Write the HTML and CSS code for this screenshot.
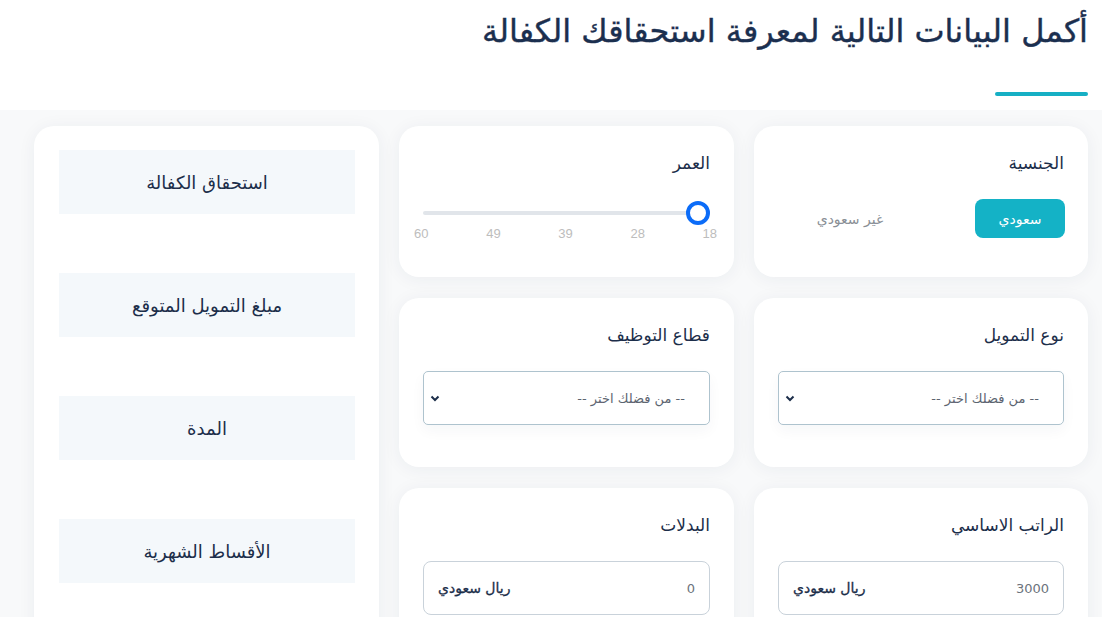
FILE: index.html
```html
<!DOCTYPE html>
<html lang="ar" dir="rtl">
<head>
  <meta charset="utf-8">
  <meta name="viewport" content="width=device-width, initial-scale=1">
  <title>حاسبة الكفالة</title>
  <link rel="stylesheet" href="styles.css">
</head>
<body>
  <header class="head">
    <h1>أكمل البيانات التالية لمعرفة استحقاقك الكفالة</h1>
    <i class="bar"></i>
  </header>
  <main class="calc">
    <section class="card">
      <h3>الجنسية</h3>
      <div class="toggle">
        <button class="opt on">سعودي</button>
        <button class="opt">غير سعودي</button>
      </div>
    </section>
    <section class="card">
      <h3>العمر</h3>
      <input class="range" type="range" min="18" max="60" value="18">
      <div class="ticks"><span>18</span><span>28</span><span>39</span><span>49</span><span>60</span></div>
    </section>
    <aside class="card results">
      <div class="res">استحقاق الكفالة</div>
      <div class="res">مبلغ التمويل المتوقع</div>
      <div class="res">المدة</div>
      <div class="res">الأقساط الشهرية</div>
    </aside>
    <section class="card tall">
      <h3>نوع التمويل</h3>
      <div class="select">
        <span>-- من فضلك اختر --</span>
        <svg width="10" height="7" viewBox="0 0 10 7"><path d="M1.5 1.5L5 5l3.5-3.5" fill="none" stroke="#1c2e4a" stroke-width="2"/></svg>
      </div>
    </section>
    <section class="card tall">
      <h3>قطاع التوظيف</h3>
      <div class="select">
        <span>-- من فضلك اختر --</span>
        <svg width="10" height="7" viewBox="0 0 10 7"><path d="M1.5 1.5L5 5l3.5-3.5" fill="none" stroke="#1c2e4a" stroke-width="2"/></svg>
      </div>
    </section>
    <section class="card tall">
      <h3>الراتب الاساسي</h3>
      <div class="money"><span class="val">3000</span><b>ريال سعودي</b></div>
    </section>
    <section class="card tall">
      <h3>البدلات</h3>
      <div class="money"><span class="val">0</span><b>ريال سعودي</b></div>
    </section>
  </main>
</body>
</html>
```

FILE: styles.css
```css
body {
  margin: 0;
  font-family: "DejaVu Sans", "Noto Sans", sans-serif;
  color: #1c2e4a;
  background: #f8f9fa;
}

.head {
  background: #fff;
  padding: 7px 14px 14px;
}
.head h1 {
  margin: 0;
  font-size: 32px;
  font-weight: 400;
  color: #1b2f4f;
  line-height: 48px;
  -webkit-text-stroke: .4px #1b2f4f;
}
.head .bar {
  display: block;
  width: 93px;
  height: 4px;
  border-radius: 2px;
  background: #16afc4;
  margin-top: 37px;
}

.calc {
  display: grid;
  grid-template-columns: 334px 335px 345px;
  grid-template-rows: 151px 169px 169px;
  gap: 21px 20px;
  padding: 16px 14px 40px 34px;
}

.card {
  background: #fff;
  border-radius: 20px;
  box-shadow: 0 2px 18px rgba(30, 50, 80, .06);
  padding: 24px 24px 20px;
}
.card h3 {
  margin: 0;
  font-size: 17px;
  font-weight: 500;
  line-height: 26px;
}

.toggle {
  display: flex;
  gap: 80px;
  margin-top: 23px;
  margin-right: -1px;
}
.opt {
  width: 90px;
  height: 39px;
  border: 0;
  border-radius: 8px;
  background: none;
  font: inherit;
  font-size: 14px;
  color: #8a8f96;
}
.opt.on {
  background: #14b2c6;
  color: #fff;
}

.range {
  display: block;
  width: 100%;
  margin: 25px 0 0;
  height: 24px;
  background: none;
  -webkit-appearance: none;
}
.range::-webkit-slider-runnable-track {
  height: 4px;
  border-radius: 2px;
  background: #e1e5ea;
}
.range::-webkit-slider-thumb {
  -webkit-appearance: none;
  width: 24px;
  height: 24px;
  margin-top: -10px;
  box-sizing: border-box;
  border-radius: 50%;
  border: 4px solid #0b6cf8;
  background: #fff;
}
.ticks {
  display: flex;
  justify-content: space-between;
  margin: 1px -7px 0 -9px;
  font-family: "Liberation Sans", Arial, sans-serif;
  font-size: 13px;
  color: #bdbdbd;
}

.select {
  display: flex;
  align-items: center;
  justify-content: space-between;
  height: 54px;
  box-sizing: border-box;
  margin-top: 23px;
  padding: 0 24px 0 6px;
  border: 1px solid #aec3ce;
  border-radius: 5px;
  font-size: 13px;
  color: #5c6470;
  box-shadow: 0 6px 14px rgba(30, 50, 80, .04);
}

.money {
  display: flex;
  align-items: center;
  justify-content: space-between;
  height: 54px;
  box-sizing: border-box;
  margin-top: 23px;
  padding: 0 14px;
  border: 1px solid #c9d2da;
  border-radius: 8px;
  font-size: 14px;
}
.money .val {
  font-size: 13px;
  color: #6c737c;
}
.money b {
  font-weight: 400;
  color: #1c2e4a;
  -webkit-text-stroke: .3px #1c2e4a;
}

.results {
  grid-column: 3;
  grid-row: 1 / span 3;
  display: flex;
  flex-direction: column;
  gap: 59px;
  padding: 24px 24px 0 25px;
}
.res {
  height: 64px;
  display: flex;
  align-items: center;
  justify-content: center;
  background: #f4f8fb;
  font-size: 18px;
  font-weight: 500;
}
```
